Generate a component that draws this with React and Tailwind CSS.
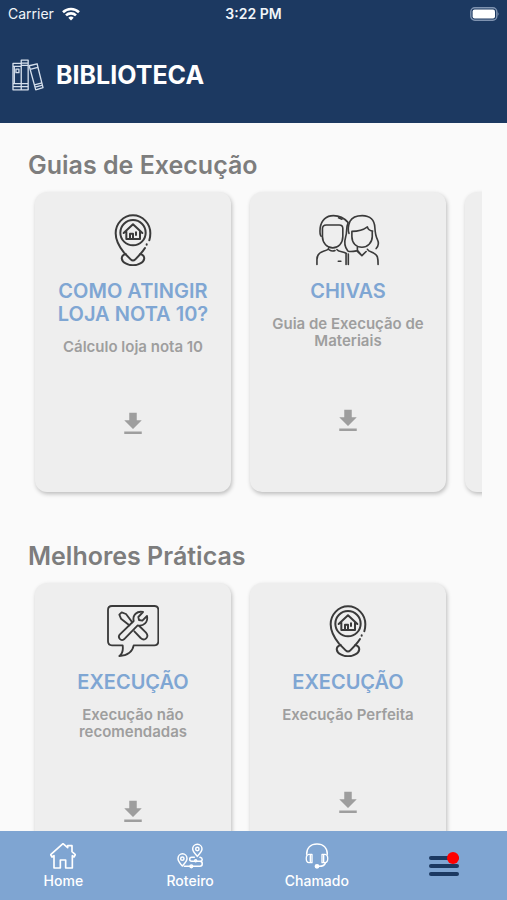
const SECTIONS = [
  {
    id: 'guias',
    title: 'Guias de Execução',
    cards: [
      { id: 'loja-nota-10', icon: PinIcon, title: 'COMO ATINGIR LOJA NOTA 10?', desc: 'Cálculo loja nota 10' },
      { id: 'chivas', icon: PeopleIcon, title: 'CHIVAS', desc: 'Guia de Execução de Materiais' },
      { id: 'proximo' },
    ],
  },
  {
    id: 'praticas',
    title: 'Melhores Práticas',
    cards: [
      { id: 'nao-recomendadas', icon: ToolsIcon, title: 'EXECUÇÃO', desc: 'Execução não recomendadas' },
      { id: 'perfeita', icon: PinIcon, title: 'EXECUÇÃO', desc: 'Execução Perfeita' },
    ],
  },
];

const TABS = [
  { id: 'home', label: 'Home', icon: HomeIcon },
  { id: 'roteiro', label: 'Roteiro', icon: RouteIcon },
  { id: 'chamado', label: 'Chamado', icon: HeadsetIcon },
];

function PinIcon() {
  return (
    <svg viewBox="260 222 156 156" className="h-[52px] w-[52px]" fill="none" stroke="#3a3a3a" strokeWidth="6" strokeLinecap="round" strokeLinejoin="round">
      <path d="M387 301c2-7 3-14 3-21a52 54 0 0 0-104 0c0 22 12 42 25 58l20 20q7 7 14 0c10-10 21-21 29-34" />
      <circle cx="338" cy="278" r="38" />
      <path d="M310 279l28-26 28 26M318 274v23h41v-23M329 296v-15h9v15M347 277v8" />
      <path d="M316 342c-18 6-13 22 0 28 13 7 31 7 44 0 13-6 18-22 0-28" />
      <path d="M379 313v1" />
    </svg>
  );
}

function PeopleIcon() {
  return (
    <svg viewBox="222 101 204 159" className="h-[52px] w-[66px]" fill="none" stroke="#3a3a3a" strokeWidth="5" strokeLinecap="round" strokeLinejoin="round">
      {/* man */}
      <path d="M241 169c-5-5-4-16-3-26 3-24 19-38 41-38 18 0 33 7 45 21" />
      <path d="M245 146c0-8 5-12 12-12h40c7 0 11 4 11 11v25c0 21-14 35-31 35s-32-14-32-35z" />
      <path d="M295 112l10 4M265 204c-2 8-9 9-17 11-14 4-20 12-20 26v15M266 211q9 6 18 2M290 210c4 7 18 6 29 12M294 246h8M318 224v32M325 224v32" />
      {/* woman */}
      <path d="M327 160c-3-9-2-25 3-37 7-13 20-18 38-18 25 0 38 15 39 37 1 18 2 26 8 37 5 10 3 20-4 28" />
      <path d="M324 128c-7 14-2 28-7 42-5 17-4 32 6 44 6 4 18 2 27 0" />
      <path d="M336 154c20 0 36-5 48-14 2 8 8 12 16 13M336 155v15c0 21 14 33 31 33s32-14 32-33v-14" />
      <path d="M353 203v9l14 17 13-13M353 216l14 13M384 209c3 7 13 8 21 13 10 5 12 12 12 34" />
    </svg>
  );
}

function ToolsIcon() {
  return (
    <svg viewBox="260 45 156 156" className="h-[52px] w-[52px]" fill="none" stroke="#3a3a3a" strokeWidth="5.5" strokeLinecap="round" strokeLinejoin="round">
      <path d="M275 48h127q12 0 12 12v94q0 12-12 12h-62c-3 18-18 31-43 32 9-6 12-17 10-32h-32q-12 0-12-12V60q0-12 12-12z" />
      {/* wrench */}
      <path d="M298 134l42-41c-4-18 10-31 28-27l-14 15 2 9 10 2 14-14c4 18-10 32-28 28l-41 42c-9 7-20-5-13-14z" />
      {/* screwdriver */}
      <path d="M336 97l-19-25-13-5-7 7 5 12 25 20M357 108l20 20c11 13-4 27-16 16l-19-20" />
    </svg>
  );
}

function BooksIcon() {
  return (
    <svg viewBox="36 176 97 96" className="h-8 w-8" fill="none" stroke="#d5dfec" strokeWidth="4" strokeLinejoin="round" aria-hidden="true">
      <path d="M39 189h25v80H39zM64 179h21v90H64zM39 198h25M39 250h25M39 259h25M64 188h21M64 195h21M64 250h21M64 259h21" />
      <path d="M48 206h9v11h-9zM43 198v52" />
      <path d="M88 196l24-6 18 72-22 7zM91 207l23-6M104 254l23-6M106 261l23-6" />
    </svg>
  );
}

function HomeIcon() {
  return (
    <svg viewBox="152 188 78 78" className="h-[26px] w-[26px]" fill="none" stroke="white" strokeWidth="5" strokeLinejoin="round">
      <path d="M154 223l37-33 14 12v-6h13v18l10 9-4 7-5-4v37h-20v-24h-16v24h-19v-37l-6 4z" />
    </svg>
  );
}

function RouteIcon() {
  return (
    <svg viewBox="534 188 78 78" className="h-[26px] w-[26px]" fill="none" stroke="white" strokeWidth="4.5" strokeLinecap="round" strokeLinejoin="round">
      <path d="M595 228c-8-9-14-15-14-22a14 14 0 0 1 28 0c0 7-6 13-14 22z" />
      <circle cx="595" cy="206" r="5" />
      <path d="M550 257c-8-9-13-15-13-22a13 14 0 0 1 27 0c0 7-6 13-14 22z" />
      <circle cx="550" cy="235" r="5" />
      <path d="M586 231h-8c-8 0-8 12 0 12h25c9 0 9 15 0 15h-47M603 231c9 2 8 11 2 12" />
      <circle cx="577" cy="258" r="4" />
      <circle cx="590" cy="241" r="3" />
    </svg>
  );
}

function HeadsetIcon() {
  return (
    <svg viewBox="150 188 78 78" className="h-[26px] w-[26px]" fill="none" stroke="white" strokeWidth="4.5" strokeLinecap="round" strokeLinejoin="round">
      <path d="M158 222c0-19 12-31 31-31s31 12 31 31" />
      <path d="M165 222h9v25h-9c-11-1-11-24 0-25zM213 222h-9v25h9c11-1 11-24 0-25zM169 224v21M209 224v21" strokeWidth="4" />
      <path d="M214 248c-2 7-9 10-19 10" />
      <circle cx="189" cy="258" r="5" fill="white" />
    </svg>
  );
}

function DownloadIcon() {
  return (
    <svg viewBox="0 0 24 24" className="h-[30px] w-[30px]" fill="#9e9e9e">
      <path d="M19 9h-4V3H9v6H5l7 7 7-7zM5 18v2h14v-2H5z" />
    </svg>
  );
}

function StatusBar() {
  return (
    <div className="grid h-7 grid-cols-3 items-center px-2 text-sm text-slate-100">
      <div className="flex items-center gap-2">
        <span>Carrier</span>
        <svg viewBox="0 0 18 14" className="h-[14px] w-[18px]" fill="none" stroke="white" strokeWidth="2.6" aria-hidden="true">
          <path d="M1 5.2a11.5 11.5 0 0 1 16 0M4 8.4a7.2 7.2 0 0 1 10 0" />
          <path d="M9 13.6l-2.7-2.8a4 4 0 0 1 5.4 0z" fill="white" stroke="none" />
        </svg>
      </div>
      <span className="text-center font-semibold">3:22 PM</span>
      <svg viewBox="0 0 30 14" className="h-[14px] w-[30px] justify-self-end" aria-hidden="true">
        <rect x="1.8" y="0.8" width="26" height="12.4" rx="4" fill="none" stroke="#7f93b0" strokeWidth="1.4" />
        <rect x="3.6" y="2.4" width="22.4" height="9.2" rx="2" fill="white" />
        <path d="M28.6 5q2 2 0 4z" fill="#7f93b0" />
      </svg>
    </div>
  );
}

function GuideCard({ card }) {
  const Icon = card.icon;
  return (
    <li className="flex h-[300px] w-[196px] shrink-0 flex-col items-center rounded-xl bg-[#eeeeee] px-4 pt-[22px] text-center shadow-[1px_2px_4px_rgba(0,0,0,0.25)]">
      {Icon && (
        <>
          <Icon />
          <h3 className="mt-[14px] text-xl leading-[23px] font-semibold text-[#7fa6d3]">{card.title}</h3>
          <p className="mt-3 text-[15px] leading-[17px] font-semibold text-[#9e9e9e]">{card.desc}</p>
          <div className="flex flex-1 items-center">
            <button type="button" aria-label={`Baixar ${card.desc}`}>
              <DownloadIcon />
            </button>
          </div>
        </>
      )}
    </li>
  );
}

export default function App() {
  return (
    <div className="flex h-screen flex-col bg-[#fafafa] font-['Inter',sans-serif]">
      <header className="shrink-0 bg-[#1c3961] pb-8">
        <StatusBar />
        <div className="flex items-center gap-3 px-3 pt-[31px]">
          <BooksIcon />
          <h1 className="text-[25px] leading-8 font-bold text-white">BIBLIOTECA</h1>
        </div>
      </header>

      <main className="min-h-0 flex-1 overflow-y-auto [scrollbar-width:none]">
        {SECTIONS.map(section => (
          <section key={section.id} className="px-[25px] pt-7">
            <h2 className="px-[3px] text-[25px] leading-7 font-semibold text-[#7d7d7d]">{section.title}</h2>
            <ul className="flex gap-[19px] overflow-x-auto pt-[13px] pb-[22px] pl-2.5 [scrollbar-width:none]">
              {section.cards.map(card => (
                <GuideCard key={card.id} card={card} />
              ))}
            </ul>
          </section>
        ))}
      </main>

      <nav className="grid h-[69px] shrink-0 grid-cols-4 bg-[#7fa5d2] text-sm font-medium text-white">
        {TABS.map(({ id, label, icon: Icon }) => (
          <a key={id} href={`#${id}`} className="flex flex-col items-center gap-0.5 pt-3">
            <Icon />
            <span>{label}</span>
          </a>
        ))}
        <button type="button" aria-label="Menu" className="flex items-center justify-center">
          <span className="relative flex flex-col gap-1">
            <span className="h-1 w-[30px] rounded-full bg-[#1c3961]" />
            <span className="h-1 w-[30px] rounded-full bg-[#1c3961]" />
            <span className="h-1 w-[30px] rounded-full bg-[#1c3961]" />
            <span className="absolute -top-1 right-0 h-3 w-3 rounded-full bg-[#ff0000]" />
          </span>
        </button>
      </nav>
    </div>
  );
}
